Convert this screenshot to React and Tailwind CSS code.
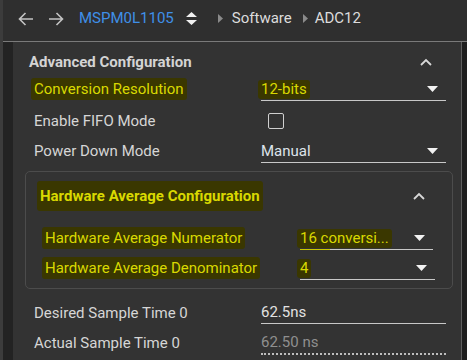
// ADC12 settings pane: breadcrumb bar on top, then the advanced config
// section with a nested collapsible group. highlighted rows are the marker
// overlay from the screenshot.

const font = { fontFamily: "Roboto, 'Noto Sans', sans-serif" };

function Hl({ children, className = "" }) {
  return (
    <span className={`-mx-[3px] rounded-[3px] bg-[#3a3700] px-[3px] py-[2px] text-[#d9d900] ${className}`}>
      {children}
    </span>
  );
}

function Caret() {
  return (
    <svg width="11" height="6" viewBox="0 0 11 6" className="shrink-0" aria-hidden="true">
      <path d="M0 0h11L5.5 6z" fill="#f2f2f2" />
    </svg>
  );
}

function ChevronUp() {
  return (
    <svg width="12" height="8" viewBox="0 0 12 8" fill="none" stroke="#d8d8d8" strokeWidth="1.8" aria-hidden="true">
      <path d="M1 7l5-5 5 5" />
    </svg>
  );
}

function Crumb() {
  return (
    <svg width="5" height="9" viewBox="0 0 5 9" aria-hidden="true">
      <path d="M0 0l5 4.5L0 9z" fill="#8a8a8a" />
    </svg>
  );
}

function Select({ value, hl, split, width = "w-[185px]" }) {
  return (
    <div className={`flex h-[24px] flex-col ${width}`}>
      <div className="flex min-h-0 flex-1 items-center justify-between pr-[8px] pt-[2px] leading-none">
        {hl ? <Hl>{value}</Hl> : <span className="text-[#dde3ea]">{value}</span>}
        <Caret />
      </div>
      {split ? (
        <div className="flex h-[1.5px] shrink-0">
          <div className="w-[30px] bg-[#c8c800]" />
          <div className="flex-1 bg-[#c8c8c8]" />
        </div>
      ) : (
        <div className="h-[1.5px] shrink-0 bg-[#c8c8c8]" />
      )}
    </div>
  );
}

function Row({ label, hl, children, h = "h-[30px]", labelW = "w-[227px]" }) {
  return (
    <div className={`flex items-center ${h}`}>
      <div className={`${labelW} shrink-0`}>{hl ? <Hl>{label}</Hl> : label}</div>
      {children}
    </div>
  );
}

export default function App() {
  return (
    <div style={font} className="flex h-[360px] w-[467px] overflow-hidden bg-[#2f2f2f] text-[15px] text-[#d6d6d6]">
      <div className="w-[3px] shrink-0 bg-[#3c3c3c]" />
      <div className="flex flex-1 flex-col">
        <div className="flex h-[42px] shrink-0 items-center border-b border-[#7a7a7a] pb-[4px]">
          <svg width="16" height="14" viewBox="0 0 16 14" fill="none" stroke="#c4c4c4" strokeWidth="1.6" className="ml-[15px]" aria-hidden="true">
            <path d="M15 7H1.5M7.5 1L1.5 7l6 6" />
          </svg>
          <svg width="16" height="14" viewBox="0 0 16 14" fill="none" stroke="#c4c4c4" strokeWidth="1.6" className="ml-[14px]" aria-hidden="true">
            <path d="M1 7h13.5M8.5 1l6 6-6 6" />
          </svg>
          <span className="ml-[15px] text-[#3f8fe8]">MSPM0L1105</span>
          <svg width="11" height="13" viewBox="0 0 11 13" className="ml-[12px]" aria-hidden="true">
            <path d="M5.5 0L11 5H0z M0 8h11l-5.5 5z" fill="#f0f0f0" />
          </svg>
          <span className="ml-[21px]"><Crumb /></span>
          <span className="ml-[9px] text-[#dcdcdc]">Software</span>
          <span className="ml-[11px]"><Crumb /></span>
          <span className="ml-[7px] text-[#dcdcdc]">ADC12</span>
        </div>
        <div className="flex flex-1">
          <div className="w-[10px] shrink-0 bg-[#232323]" />
          <div className="flex flex-1 flex-col border-r border-[#5e5e5e] bg-[#333333]">
            <div className="mt-[9px] flex h-[22px] items-center justify-between pl-[16px] pr-[29px]">
              <span className="font-bold text-[#d4d4d4]">Advanced Configuration</span>
              <ChevronUp />
            </div>
            <div className="pl-[21px]">
              <Row label="Conversion Resolution" hl h="h-[32px]">
                <Select value="12-bits" hl />
              </Row>
              <Row label="Enable FIFO Mode" h="h-[32px]">
                <div className="ml-[7px] h-[16px] w-[16px] rounded-[2px] border-[1.5px] border-[#d0d0d0]" />
              </Row>
              <Row label="Power Down Mode" h="h-[28px]">
                <Select value="Manual" />
              </Row>
            </div>
            <div className="ml-[12px] mr-[8px] mt-[6px] rounded-[5px] border border-[#4c4c4c] pb-[5px]">
              <div className="mt-[12px] flex h-[24px] items-center justify-between pl-[14px] pr-[27px]">
                <Hl className="py-[4px] font-bold">Hardware Average Configuration</Hl>
                <ChevronUp />
              </div>
              <div className="mt-[15px] pl-[19px]">
                <Row label="Hardware Average Numerator" hl labelW="w-[255px]">
                  <Select value="16 conversi..." hl split width="w-[133px]" />
                </Row>
                <Row label="Hardware Average Denominator" hl labelW="w-[255px]">
                  <Select value="4" hl width="w-[135px]" />
                </Row>
              </div>
            </div>
            <div className="mt-[9px] pl-[21px]">
              <Row label="Desired Sample Time 0">
                <div className="flex h-[22px] w-[185px] flex-col">
                  <div className="flex min-h-0 flex-1 items-center leading-none text-[#e2e2e2]">62.5ns</div>
                  <div className="h-[1.5px] shrink-0 bg-[#c8c8c8]" />
                </div>
              </Row>
              <Row label="Actual Sample Time 0">
                <div className="flex h-[23px] w-[185px] flex-col border-b-2 border-dotted border-[#bdbdbd]">
                  <div className="flex min-h-0 flex-1 items-center leading-none text-[#8f8f8f]">62.50 ns</div>
                </div>
              </Row>
            </div>
          </div>
          <div className="w-[5px] shrink-0 bg-[#1e1e1e]" />
        </div>
      </div>
    </div>
  );
}
